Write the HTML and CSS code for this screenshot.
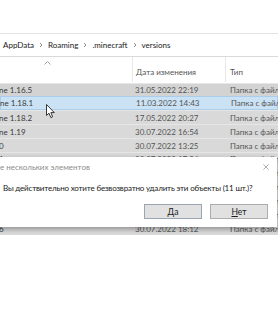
FILE: index.html
```html
<!DOCTYPE html>
<html lang="ru">
<head>
    <meta charset="UTF-8">
    <meta name="viewport" content="width=device-width, initial-scale=1.0">
    <title>versions</title>
    <link rel="stylesheet" href="styles.css">
</head>
<body>

    <div class="explorer">
        <div class="ribbon"></div>

        <div class="address">
            <span>AppData</span>
            <svg class="chev" viewBox="0 0 4 6"><path d="M1 1 L3 3 L1 5" /></svg>
            <span>Roaming</span>
            <svg class="chev" viewBox="0 0 4 6"><path d="M1 1 L3 3 L1 5" /></svg>
            <span>.minecraft</span>
            <svg class="chev" viewBox="0 0 4 6"><path d="M1 1 L3 3 L1 5" /></svg>
            <span>versions</span>
        </div>

        <div class="header">
            <div class="col col-name">
                <svg class="sort" viewBox="0 0 7 4"><path d="M0.5 3.5 L3.5 0.5 L6.5 3.5" /></svg>
            </div>
            <div class="col col-date">Дата изменения</div>
            <div class="col col-type">Тип</div>
        </div>

        <div class="rows">
            <div class="row"><span class="name">ne 1.16.5</span><span class="date">31.05.2022 22:19</span><span class="type">Папка с файлами</span></div>
            <div class="row hover"><span class="name">ne 1.18.1</span><span class="date">11.03.2022 14:43</span><span class="type">Папка с файлами</span></div>
            <div class="row"><span class="name">ne 1.18.2</span><span class="date">17.05.2022 20:27</span><span class="type">Папка с файлами</span></div>
            <div class="row"><span class="name">ne 1.19</span><span class="date">30.07.2022 16:54</span><span class="type">Папка с файлами</span></div>
            <div class="row"><span class="name">0</span><span class="date">30.07.2022 13:25</span><span class="type">Папка с файлами</span></div>
            <div class="row"><span class="name">1</span><span class="date">30.07.2022 17:24</span><span class="type">Папка с файлами</span></div>
            <div class="row"><span class="name">2</span><span class="date">30.07.2022 17:31</span><span class="type">Папка с файлами</span></div>
            <div class="row"><span class="name">3</span><span class="date">30.07.2022 17:40</span><span class="type">Папка с файлами</span></div>
            <div class="row"><span class="name">4</span><span class="date">30.07.2022 17:52</span><span class="type">Папка с файлами</span></div>
            <div class="row"><span class="name">5</span><span class="date">30.07.2022 18:05</span><span class="type">Папка с файлами</span></div>
            <div class="row"><span class="name">6</span><span class="date">30.07.2022 18:12</span><span class="type">Папка с файлами</span></div>
        </div>
    </div>

    <svg class="cursor" viewBox="0 0 10 15">
        <path d="M0.5 0.5 L0.5 11.5 L3 9.2 L4.8 13.6 L6.6 12.8 L4.9 8.6 L8.3 8.6 Z" />
    </svg>

    <div class="dialog">
        <div class="dialog-title">
            <span>е нескольких элементов</span>
            <svg class="close" viewBox="0 0 8 8"><path d="M0.5 0.5 L7.5 7.5 M7.5 0.5 L0.5 7.5" /></svg>
        </div>
        <p class="message">Вы действительно хотите безвозвратно удалить эти объекты (11 шт.)?</p>
        <div class="buttons">
            <button class="btn btn-default"><u>Д</u>а</button>
            <button class="btn"><u>Н</u>ет</button>
        </div>
    </div>

</body>
</html>
```

FILE: styles.css
```css
body {
    margin: 0;
    width: 278px;
    height: 320px;
    overflow: hidden;
    position: relative;
    background: white;
    font-family: 'Lato', 'Noto Sans', sans-serif;
    font-size: 8.5px;
    color: #1e1e1e;
}

.ribbon {
    height: 33px;
    border-bottom: 1px solid #e3e3e3;
}

.address {
    height: 22px;
    display: flex;
    align-items: center;
    gap: 3.5px;
    padding-left: 3px;
    border-bottom: 1px solid #dadada;
    font-size: 8px;
    color: #1a1a1a;
}

.chev {
    width: 4px;
    height: 6px;
    margin: 0 1.5px;
}

.chev path {
    fill: none;
    stroke: #808080;
    stroke-width: 0.9;
}

.header {
    height: 25px;
    display: flex;
    color: #555;
    font-size: 8px;
}

.col {
    display: flex;
    align-items: flex-end;
    padding-bottom: 5px;
    box-sizing: border-box;
    flex-shrink: 0;
}

.col-name {
    width: 133px;
    border-right: 1px solid #e8e8e8;
    align-items: flex-start;
    padding-top: 4px;
    padding-left: 44px;
}

.sort {
    width: 7px;
    height: 4px;
}

.sort path {
    fill: none;
    stroke: #9a9a9a;
    stroke-width: 0.9;
}

.col-date {
    width: 93px;
    padding-left: 3px;
    border-right: 1px solid #e8e8e8;
}

.col-type {
    padding-left: 4px;
}

.rows {
    margin-top: 0.5px;
}

.row {
    height: 13.9px;
    display: flex;
    align-items: center;
    box-sizing: border-box;
    background: #d9d9d9;
    border-top: 1px solid #e6e6e6;
    color: #3a3a3a;
    white-space: nowrap;
    font-size: 8px;
}

.row:first-child {
    background: #d3d3d3;
}

.row.hover {
    background: #cbe2f4;
    border: 1px solid #a9cdea;
}

.name,
.date,
.type {
    flex-shrink: 0;
}

.name {
    width: 133px;
    margin-left: -1px;
}

.date {
    width: 94px;
    padding-left: 3px;
    box-sizing: border-box;
    color: #555;
}

.type {
    padding-left: 4px;
    color: #555;
}

.cursor {
    position: absolute;
    left: 46px;
    top: 104px;
    width: 10px;
    height: 15px;
}

.cursor path {
    fill: white;
    stroke: #222;
    stroke-width: 0.9;
    stroke-linejoin: round;
}

.dialog {
    position: absolute;
    left: -10px;
    right: 1px;
    top: 157px;
    height: 70px;
    background: white;
    box-shadow: 0 2px 5px rgba(0, 0, 0, 0.35);
    padding-left: 10px;
    box-sizing: border-box;
}

.dialog-title {
    height: 20px;
    display: flex;
    align-items: center;
    justify-content: space-between;
    padding-right: 8px;
    color: #8c8c8c;
    font-size: 8px;
}

.close {
    width: 6px;
    height: 6px;
}

.close path {
    stroke: #7a7a7a;
    stroke-width: 0.8;
}

.message {
    margin: 6px 0 0 3px;
    color: #1a1a1a;
    white-space: nowrap;
    font-size: 8px;
    letter-spacing: -0.18px;
    line-height: 10px;
}

.buttons {
    display: flex;
    justify-content: flex-end;
    gap: 8px;
    padding-right: 9px;
    margin-top: 11px;
}

.btn {
    width: 58px;
    height: 15px;
    padding: 0;
    border: 1px solid #adadad;
    background: #e1e1e1;
    font-family: 'Lato', 'Noto Sans', sans-serif;
    font-size: 8.5px;
    color: #1a1a1a;
}

.btn-default {
    border-color: #9aa6b4;
}
```
